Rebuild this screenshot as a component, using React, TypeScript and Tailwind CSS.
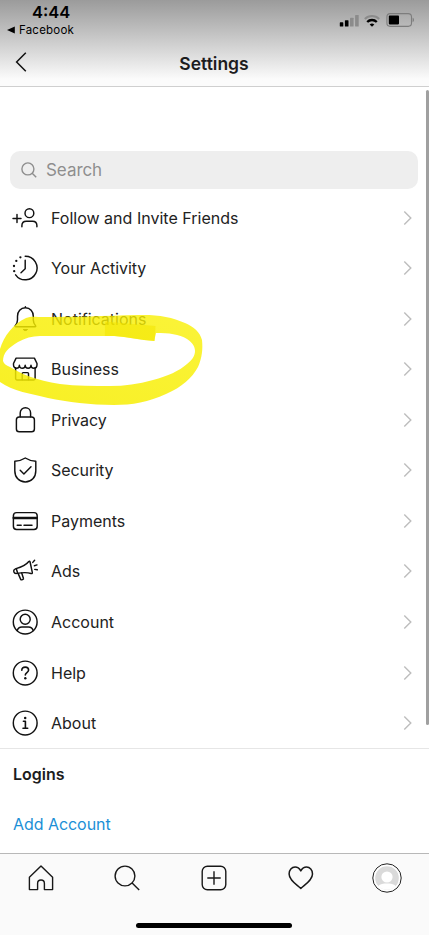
import type { ReactNode } from 'react';
import { clsx } from 'clsx';

type SettingsItem = {
  label: string;
  icon: ReactNode;
  tracking: string;
};

/* Settings list icons share a 26px box */
function RowIcon({ children }: { children: ReactNode }) {
  return (
    <svg
      viewBox="0 0 26 26"
      className="h-[26px] w-[26px] shrink-0"
      fill="none"
      stroke="#111"
      strokeWidth="1.45"
      strokeLinecap="round"
      strokeLinejoin="round"
      aria-hidden="true"
    >
      {children}
    </svg>
  );
}

const items: SettingsItem[] = [
  {
    label: 'Follow and Invite Friends',
    tracking: 'tracking-[0.01px]',
    icon: (
      <RowIcon>
        <circle cx="17.4" cy="8.2" r="4.4" />
        <path d="M9.9 21.8v-1.2c0-2.8 1.9-4.4 4.4-4.4h6.2c2.5 0 4.4 1.6 4.4 4.4v1.2" />
        <path d="M5 9.4v8M1 13.4h8" />
      </RowIcon>
    ),
  },
  {
    label: 'Your Activity',
    tracking: 'tracking-[-0.05px]',
    icon: (
      <RowIcon>
        <path d="M13.2 1.2a11.8 11.8 0 1 1-9.6 18.6" />
        <path d="M13.2 5.2v8.6l-4.2 3.9" />
        <g fill="#111" stroke="none">
          <circle cx="8.4" cy="2.3" r="1.15" />
          <circle cx="4.3" cy="5.9" r="1.15" />
          <circle cx="2" cy="11" r="1.15" />
          <circle cx="2.2" cy="16.2" r="1.15" />
        </g>
      </RowIcon>
    ),
  },
  {
    label: 'Notifications',
    tracking: 'tracking-[0px]',
    icon: (
      <RowIcon>
        <path d="M13.4 .8v1M13.4 1.8c-4.8 0-7.9 3.6-7.9 8.4v3.9c0 2.7-1.2 4.3-2.2 5.5-.5.6-.2 1.2.5 1.2H23c.7 0 1-.6.5-1.2-1-1.2-2.2-2.8-2.2-5.5v-3.9c0-4.8-3.1-8.4-7.9-8.4Z" />
        <path d="M11.4 23.8c.6 1.1 3.4 1.1 4 0Z" fill="#111" strokeWidth="1" />
      </RowIcon>
    ),
  },
  {
    label: 'Business',
    tracking: 'tracking-[0px]',
    icon: (
      <RowIcon>
        <path d="M3.6 11.8v10.8c0 .8.5 1.3 1.3 1.3h16.9c.8 0 1.3-.5 1.3-1.3V11.8" />
        <path d="M4.1 2.1h18.3l2.6 5.4v1.3c0 2-1.3 3.5-3.1 3.5-1.7 0-2.9-1.3-2.9-3 0 1.7-1.2 3-2.9 3s-2.9-1.3-2.9-3c0 1.7-1.2 3-2.9 3s-2.9-1.3-2.9-3c0 1.7-1.2 3-2.9 3-1.8 0-3-1.5-3-3.5V7.5Z" />
        <path d="M10.2 23.7v-6.1c0-.6.4-1 1-1h4.3c.6 0 1 .4 1 1v6.1" />
      </RowIcon>
    ),
  },
  {
    label: 'Privacy',
    tracking: 'tracking-[-0.05px]',
    icon: (
      <RowIcon>
        <rect x="4.4" y="9.9" width="18" height="14.9" rx="2.8" />
        <path d="M8.2 9.7V6c0-3 2.2-5.2 5.2-5.2s5.2 2.2 5.2 5.2v3.7" />
      </RowIcon>
    ),
  },
  {
    label: 'Security',
    tracking: 'tracking-[-0.05px]',
    icon: (
      <RowIcon>
        <path d="M13.3 1c3.1 2 6.6 3.1 10.5 3.2v9.5c0 6.7-4.3 11.3-10.5 11.3S2.8 20.4 2.8 13.7V4.2C6.7 4.1 10.2 3 13.3 1Z" />
        <path d="m8.2 13.3 3.7 3.7 7.1-7.2" />
      </RowIcon>
    ),
  },
  {
    label: 'Payments',
    tracking: 'tracking-[0px]',
    icon: (
      <RowIcon>
        <rect x="1.4" y="4.6" width="23.8" height="16.9" rx="3.2" />
        <path d="M1.6 10h23.4" strokeWidth="2.3" />
        <path d="M5.2 17.3h4M12 17.3h8" />
      </RowIcon>
    ),
  },
  {
    label: 'Ads',
    tracking: 'tracking-[-0.1px]',
    icon: (
      <RowIcon>
        <path d="M16.8 3.5c-3.2 4-7.6 5.8-12.8 7.1-1.8.5-2.6 2-2.1 3.3.4 1.2 1.5 1.8 3 1.5 5.8-1 9.6-1.4 14.1.1 1 .3 1.5-.2 1.3-1.1L18.1 4c-.2-.8-.8-1-1.3-.5Z" />
        <path d="m4.3 10.8 1.4 4.4M6.2 15.6l2.5 5.8c.2.5.6.6 1.1.4l1.2-.5c.5-.2.6-.6.4-1.1L9.7 15" />
        <path d="m20.8 4.4 1.8-2.1M22.4 7.8l2.6-.9M22.8 11.4l2.5.4" />
      </RowIcon>
    ),
  },
  {
    label: 'Account',
    tracking: 'tracking-[0px]',
    icon: (
      <RowIcon>
        <circle cx="13.2" cy="13" r="11.9" />
        <circle cx="13.2" cy="10.2" r="5" />
        <path d="M5.2 21.5c.7-2.2 2.5-3.5 4.7-3.5h6.6c2.2 0 4 1.3 4.7 3.5" />
      </RowIcon>
    ),
  },
  {
    label: 'Help',
    tracking: 'tracking-[0px]',
    icon: (
      <RowIcon>
        <circle cx="13.2" cy="13" r="11.9" />
        <path d="M9.8 10.2c0-1.9 1.4-3.1 3.4-3.1s3.4 1.2 3.4 3c0 2.5-3.3 2.5-3.3 4.9" strokeWidth="1.6" />
        <circle cx="13.3" cy="18.3" r="1.2" fill="#111" stroke="none" />
      </RowIcon>
    ),
  },
  {
    label: 'About',
    tracking: 'tracking-[0px]',
    icon: (
      <RowIcon>
        <circle cx="13.2" cy="13" r="11.9" />
        <path d="M11.4 11.2h2v6.9M11 18.2h4.7" strokeWidth="1.6" />
        <circle cx="13.2" cy="7.9" r="1.25" fill="#111" stroke="none" />
      </RowIcon>
    ),
  },
];

function StatusBar() {
  return (
    <div className="flex h-[38px] items-start justify-between">
      <div className="pl-1.5 pt-[3px]">
        <div className="pl-[26px] text-[16.5px] leading-[19px] font-semibold text-black">4:44</div>
        <div className="flex items-center gap-1 text-[11.5px] leading-4 tracking-[0.2px] text-black">
          <svg viewBox="0 0 9 8" className="h-2 w-[9px]" aria-hidden="true">
            <path d="M8.8.5v7L1 4Z" fill="#000" />
          </svg>
          Facebook
        </div>
      </div>
      <div className="flex items-center gap-1.5 pr-[14px] pt-[13px]">
        <svg viewBox="0 0 20 13" className="h-[13px] w-5" aria-hidden="true">
          <rect x=".8" y="8.3" width="3.5" height="4.2" rx=".6" />
          <rect x="5.9" y="6.2" width="3.6" height="6.3" rx=".6" />
          <rect x="11" y="3.7" width="3.6" height="8.8" rx=".6" fill="#8b8b8b" />
          <rect x="16.1" y="1" width="3.6" height="11.5" rx=".6" fill="#8b8b8b" />
        </svg>
        <svg viewBox="0 0 16 13" className="-ml-[1px] h-[13px] w-4" fill="none" strokeWidth="2" aria-hidden="true">
          <path d="M.8 5a10.3 10.3 0 0 1 14.4 0" stroke="#8b8b8b" />
          <path d="M3.2 8a6.8 6.8 0 0 1 9.6 0" stroke="#000" strokeWidth="2.3" />
          <path d="M5.7 10.6a3.4 3.4 0 0 1 4.6 0L8 12.8Z" fill="#000" />
        </svg>
        <svg viewBox="0 0 29 14" className="h-[14px] w-[29px]" aria-hidden="true">
          <rect x=".9" y=".6" width="24.6" height="12.8" rx="3.3" fill="none" stroke="#7d7d7d" strokeWidth="1.1" />
          <rect x="2.8" y="2.6" width="10.2" height="8.8" rx=".8" />
          <path d="M26.6 4.8c1.8.6 1.8 3.8 0 4.4Z" fill="#7d7d7d" />
        </svg>
      </div>
    </div>
  );
}

function Header() {
  return (
    <header className="h-[87px] border-b border-[#cfcfcf] bg-linear-to-b from-[#9b9b9b] via-[#cbcbcb] via-47% to-[#fbfbfb] to-92%">
      <StatusBar />
      <div className="grid h-[48px] grid-cols-3 items-center">
        <button className="pl-[15px]" aria-label="Back">
          <svg viewBox="0 0 12 20" className="h-5 w-3" fill="none" stroke="#111" strokeWidth="1.5" aria-hidden="true">
            <path d="M10.8.8 1.6 10l9.2 9.2" />
          </svg>
        </button>
        <h1 className="pt-[3px] pr-px text-center text-[17.5px] leading-6 font-semibold text-[#1c1c1e]">Settings</h1>
      </div>
    </header>
  );
}

function SettingsRow({ item }: { item: SettingsItem }) {
  return (
    <li className="flex h-[50.55px] items-center gap-[13px] pr-[17px] pl-3">
      {item.icon}
      <span className={clsx('flex-1 text-[16px] leading-5 text-[#222]', item.tracking)}>{item.label}</span>
      <svg viewBox="0 0 9 14" className="h-[14px] w-[9px]" fill="none" stroke="#bdbdbd" strokeWidth="1.4" aria-hidden="true">
        <path d="m1.3.6 6.5 6.4-6.5 6.4" />
      </svg>
    </li>
  );
}

/* Marker stroke circled round the Business row */
function HighlighterMark() {
  return (
    <svg viewBox="0 0 210 100" className="pointer-events-none absolute top-[310px] left-0 h-[100px] w-[210px]" aria-hidden="true">
      <defs>
        <linearGradient id="marker" x1="0" y1="1" x2="1" y2="0">
          <stop offset="0" stopColor="#f6ed00" stopOpacity=".86" />
          <stop offset="1" stopColor="#f9f000" stopOpacity=".78" />
        </linearGradient>
      </defs>
      <path
        fillRule="evenodd"
        fill="url(#marker)"
        d="M0 39C4 26 13 14 26 8c5-2 10-1 17-1 30 0 60-1 96-2 18-.5 33 2 46 8 9 4 15 9 17 17 1 9 0 18-4 27-6 11-16 20-32 27-17 8-34 11-52 11-24 0-46-3-66-7C32 84 12 81 0 72ZM3 51c1 3 3 4 7 6 11 7 26 13 50 17 16 2 34 2 50 2 15 0 28-2 43-6 15-4 26-9 34-16 5-4 8-8 8-13 0-4-2-8-8-12-8-5-18-6-31-6l-2 8c-14-1-27-4-40-5H40c-8 0-15 2-22 6C8 38 3 43 3 51Z"
      />
      <path d="M105 11.5 155.500 16l-.6 15c-14-1-27-4-40-5h-10Z" fill="#f3e600" fillOpacity=".55" />
    </svg>
  );
}

function TabBar() {
  return (
    <nav className="h-[82px] border-t border-[#b8b8b8] bg-[#fafafa]">
      <div className="grid h-[47px] grid-cols-5 items-center pr-px [&>svg]:justify-self-center">
        <svg viewBox="0 0 26 26" className="relative -left-[1.5px] h-[26px] w-[26px]" fill="none" stroke="#181818" strokeWidth="1.4" strokeLinejoin="round">
          <path d="M1.4 12.3 13 1l11.6 11.3v12.3h-8.2v-6.2a3.4 3.4 0 0 0-6.8 0v6.2H1.4Z" />
        </svg>
        <svg viewBox="0 0 26 26" className="relative -left-[1px] h-[26px] w-[26px]" fill="none" stroke="#181818" strokeWidth="1.4">
          <circle cx="11" cy="11" r="9.9" />
          <path d="m18.1 18.1 7.1 7" />
        </svg>
        <svg viewBox="0 0 26 26" className="h-[26px] w-[26px]" fill="none" stroke="#181818" strokeWidth="1.4">
          <rect x="1.2" y="1.2" width="23.6" height="23.6" rx="5.2" />
          <path d="M13 6.3v13.4M6.3 13h13.4" />
        </svg>
        <svg viewBox="0 0 26 26" className="relative left-px h-[26px] w-[26px]" fill="none" stroke="#181818" strokeWidth="1.5" strokeLinejoin="round">
          <path d="M12.8 23.4C8 19 1.1 15 1.1 8.9c0-4 2.6-6.8 6-6.8 2.7 0 4.3 1.4 5.7 3.8 1.4-2.4 3-3.8 5.7-3.8 3.4 0 6 2.8 6 6.8 0 6.1-6.9 10.1-11.7 14.5Z" />
        </svg>
        <svg viewBox="0 0 30 30" className="relative left-[1.5px] h-[30px] w-[30px]">
          <circle cx="15" cy="15" r="14.2" fill="#fff" stroke="#222" strokeWidth="1" />
          <circle cx="15" cy="15" r="11.8" fill="#dadada" />
          <circle cx="15" cy="14" r="5.6" fill="#fff" />
          <path d="M6.3 23c1.8-1.8 5-2.4 8.7-2.4s6.9.6 8.7 2.4a11.8 11.8 0 0 1-17.4 0Z" fill="#fff" />
        </svg>
      </div>
      <div className="ml-[136px] mt-[22px] h-[5px] w-[156px] rounded-full bg-black" />
    </nav>
  );
}

export default function App() {
  return (
    <div className="relative flex h-[935px] w-[429px] flex-col overflow-hidden bg-white font-['Inter','Liberation_Sans',sans-serif]">
      <Header />
      <main className="flex-1">
        <div className="mt-16 mr-[11px] ml-[10px] flex h-[38px] items-center gap-[9px] rounded-[10px] bg-[#eee] pl-[11px] text-[#8e8e8e]">
          <svg viewBox="0 0 16 16" className="h-4 w-4" fill="none" stroke="currentColor" strokeWidth="1.4" aria-hidden="true">
            <circle cx="6.9" cy="6.9" r="6" />
            <path d="m11.2 11.2 4 4" />
          </svg>
          <span className="text-[17px] leading-6 tracking-[-0.05px]">Search</span>
        </div>
        <ul className="pt-[3.4px]">
          {items.map((item) => (
            <SettingsRow key={item.label} item={item} />
          ))}
        </ul>
        <section className="border-t border-[#e6e6e6] pl-[13px]">
          <h2 className="flex h-[49px] items-center text-[16px] font-semibold text-[#1c1c1e]">Logins</h2>
          <button className="flex h-[51px] items-center text-[16px] tracking-[-0.05px] text-[#1b8fd6]">Add Account</button>
        </section>
      </main>
      <TabBar />
      <HighlighterMark />
      <div className="absolute top-[90px] right-0 h-[635px] w-[3px] rounded-full bg-[#a0a0a0]" />
    </div>
  );
}
